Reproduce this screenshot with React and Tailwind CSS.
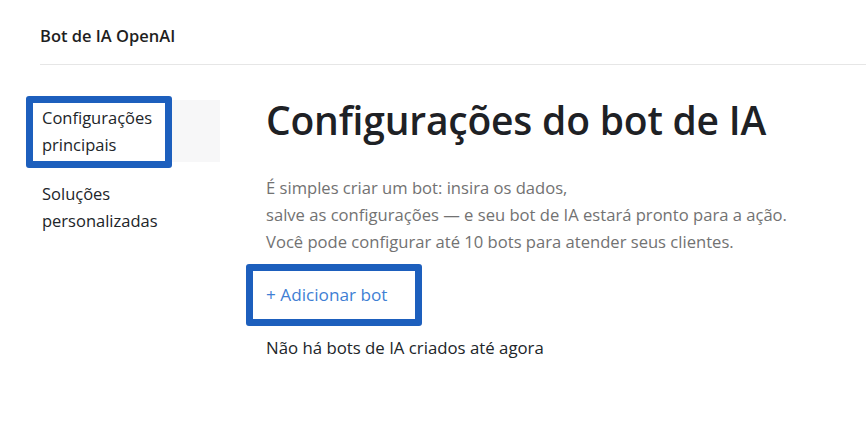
export default function App() {
  return (
    <div className="min-h-[421px] bg-white text-[#212529]" style={{ fontFamily: '"Open Sans", "Noto Sans", sans-serif' }}>
      <header className="ml-10 h-[65px] border-b border-[#e6e6e6] pt-[24px]">
        <h2 className="text-[16.5px] font-semibold leading-[24px] text-[#1f1f1f]">Bot de IA OpenAI</h2>
      </header>

      <div className="flex">
        <nav className="ml-[26px] mt-[35px] w-[194px] shrink-0">
          <div className="relative bg-[#f7f7f8] px-4 py-[4px] text-[16.5px] leading-[27px] text-[#212529]">
            <div className="absolute left-0 top-[-4px] h-[72px] w-[146px] rounded-[3px] border-[7px] border-[#1d5fbd] bg-white" />
            <span className="relative">Configurações<br />principais</span>
          </div>
          <div className="mt-[14px] px-4 py-[4px] text-[16.5px] leading-[27px] text-[#212529]">
            Soluções<br />personalizadas
          </div>
        </nav>

        <main className="ml-[46px] mt-[27px]">
          <h1 className="text-[39px] font-semibold leading-[56px] tracking-[-0.2px] text-[#1e2125]">Configurações do bot de IA</h1>

          <p className="mt-[26px] text-[16.6px] leading-[27px] text-[#727272]">
            É simples criar um bot: insira os dados,<br />
            salve as configurações — e seu bot de IA estará pronto para a ação.<br />
            Você pode configurar até 10 bots para atender seus clientes.
          </p>

          <div className="relative mt-[16px] inline-block">
            <div className="absolute left-[-20px] top-[-7px] h-[62px] w-[176px] rounded-[3px] border-[7px] border-[#1d5fbd] bg-white" />
            <button className="relative py-[10px] text-[17.2px] leading-[27px] text-[#3f7fd4]">+ Adicionar bot</button>
          </div>

          <p className="mt-[16px] text-[16.8px] leading-[27px] text-[#212529]">Não há bots de IA criados até agora</p>
        </main>
      </div>
    </div>
  );
}
